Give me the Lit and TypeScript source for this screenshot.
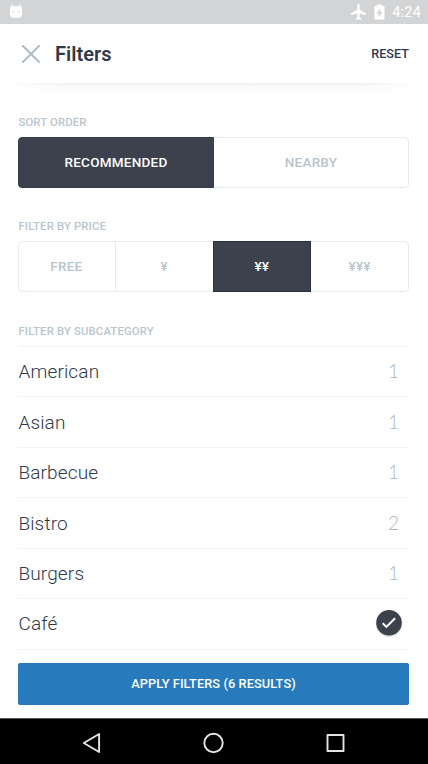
import { LitElement, html, css, svg } from "lit";
import { customElement, property, state } from "lit/decorators.js";
import { classMap } from "lit/directives/class-map.js";

@customElement("status-bar")
class StatusBar extends LitElement {
  static styles = css`
    :host { display: flex; align-items: center; height: 24px; background: #d3d4d6; color: #fff; box-sizing: border-box; padding: 0 7px 0 9px; font: 400 14.5px/24px Roboto, sans-serif; }
    .spacer { flex: 1; }
    .robot { margin-top: -3px; }
    .plane { margin-right: 8px; }
    .battery { margin-right: 7px; }
    .time { letter-spacing: 0.2px; padding-top: 2px; }
    svg { display: block; }
  `;
  render() {
    return html`
      <svg class="robot" width="14" height="16" viewBox="0 0 14 16">
        <path d="M3.5 3.5 2.8.8M10.5 3.5l.7-2.7" stroke="#fff" stroke-width="1" fill="none" />
        <path d="M3 3h8q2 0 2 2v6q0 4-4 4H5q-4 0-4-4V5q0-2 2-2z" fill="#fff" />
        <path d="M3 8.6h2M9 8.6h2" stroke="#d3d4d6" stroke-width="1" />
      </svg>
      <span class="spacer"></span>
      <svg class="plane" width="15" height="16" viewBox="2 2 19.6 20" preserveAspectRatio="none">
        <path fill="#fff" d="M21.5 16v-2l-8.2-5V3.5C13.3 2.67 12.6 2 11.8 2s-1.5.67-1.5 1.5V9l-8.2 5v2l8.2-2.5V19l-2 1.5V22l3.5-1 3.5 1v-1.5l-2-1.5v-5.5z" />
      </svg>
      <svg class="battery" width="11" height="16" viewBox="0 0 11 16">
        <path fill="#fff" fill-rule="evenodd" d="M3.2.5h4.6v1.3H9.3q1.2 0 1.2 1.2v11.3q0 1.2-1.2 1.2H1.7q-1.2 0-1.2-1.2V3q0-1.2 1.2-1.2h1.5zM6.3 4.3 2.4 9.4h2.3v3.8l3.9-5.3H6.3z" />
      </svg>
      <span class="time">4:24</span>
    `;
  }
}

@customElement("segment-group")
class SegmentGroup extends LitElement {
  @property({ attribute: false }) options: string[] = [];
  @property({ type: Number }) selected = 0;

  static styles = css`
    :host { display: flex; height: 51px; box-sizing: border-box; border: 1px solid #e6ecee; border-radius: 4px; }
    .option { flex: 1 1 0; margin: -1px 0; padding: 0; border: 0; border-left: 1px solid #e6ecee; background: none; color: #b8c5cd; font: 500 13.5px/51px Roboto, sans-serif; letter-spacing: 0.24px; box-sizing: border-box; }
    .option:first-child { border-left: 0; margin-left: -1px; }
    .on { background: #3b424e; color: #fff; border: 1px solid #27303f; }
    .on.option { line-height: 49px; }
    .on:first-child { border-radius: 4px 0 0 4px; border: 1px solid #343e4c; }
    .on + .option { border-left: 0; }
  `;
  render() {
    return this.options.map(
      (label, i) => html`<button class=${classMap({ option: true, on: i === this.selected })} @click=${() => (this.selected = i)}>${label}</button>`
    );
  }
}

@customElement("app-root")
class AppRoot extends LitElement {
  @state() private rows = [
    { name: "American", count: 1 },
    { name: "Asian", count: 1 },
    { name: "Barbecue", count: 1 },
    { name: "Bistro", count: 2 },
    { name: "Burgers", count: 1 },
    { name: "Café", checked: true },
  ] as { name: string; count?: number; checked?: boolean }[];

  static styles = css`
    :host { display: flex; flex-direction: column; height: 764px; overflow: hidden; background: #fff; font-family: Roboto, sans-serif; color: #2f394b; }
    svg { display: block; }
    .header { display: flex; align-items: center; height: 59px; padding: 0 19px 0 22px; flex: none; box-sizing: border-box; }
    .title { margin: 0 0 0 15px; flex: 1; font-size: 20px; font-weight: 600; line-height: 24px; letter-spacing: 0.05px; }
    .reset { font-size: 12.6px; font-weight: 500; line-height: 16px; letter-spacing: 0.05px; }
    .shade { height: 12px; flex: none; margin: 0 8px; background: linear-gradient(90deg, #fff, transparent 14%, transparent 86%, #fff), linear-gradient(#f0f0f1, #fbfbfb 35%, #fff); }
    .content { padding: 19px 19px 0 18px; }
    .label { height: 16px; margin: 0 0 7px; font-size: 11.3px; font-weight: 500; line-height: 17px; color: #b8c5cd; letter-spacing: 0.17px; text-indent: 0.4px; }
    .group { margin-bottom: 30px; }
    .group + .label + .group { margin-bottom: 31px; }
    .list { border-top: 1px solid #f3f4f5; }
    .row { display: flex; align-items: center; justify-content: space-between; height: 50.45px; box-sizing: border-box; padding-right: 10px; border-bottom: 1px solid #f3f4f5; font-size: 19px; font-weight: 300; }
    .name { letter-spacing: 0.15px; text-indent: 0.4px; }
    .count { font-family: Lato, sans-serif; font-size: 19px; font-weight: 300; line-height: 22px; padding-bottom: 1px; color: #a9b8c1; }
    .check { margin: -1px -3.5px 0 0; }
    .apply { display: block; flex: none; height: 42px; margin: 13.5px 19px 0 18px; padding: 0; border: 0; border-radius: 2px; background: #277abb; color: #fff; font: 500 12.8px/42px Roboto, sans-serif; letter-spacing: 0.07px; }
    .nav { display: flex; align-items: center; justify-content: space-between; height: 46.5px; margin-top: auto; flex: none; padding: 3px 82px 0 81px; background: #000; border-top: 1px solid #555; box-sizing: border-box; }
  `;

  private check() {
    return html`<svg class="check" width="28" height="28" viewBox="0 0 28 28">
      <circle cx="14" cy="14.6" r="13.4" fill="#000" opacity=".13" />
      <circle cx="14" cy="13.8" r="12.8" fill="#3b424e" />
      <path d="M7.7 14.2l3.7 3.7 8.7-8.7" fill="none" stroke="#fff" stroke-width="2" />
    </svg>`;
  }

  private navIcon(shape: unknown) {
    return html`<svg width="21" height="22" viewBox="0 0 21 22" fill="none" stroke="#e4e4e4" stroke-width="1.9" stroke-linejoin="round">${shape}</svg>`;
  }

  render() {
    return html`
      <status-bar></status-bar>
      <div class="header">
        <svg width="18" height="18" viewBox="0 0 18 18"><path d="M1 1l16 16M17 1L1 17" stroke="#afbec8" stroke-width="2.1" stroke-linecap="round" /></svg>
        <h1 class="title">Filters</h1>
        <span class="reset">RESET</span>
      </div>
      <div class="shade"></div>
      <div class="content">
        <h2 class="label">SORT ORDER</h2>
        <segment-group class="group" .options=${["RECOMMENDED", "NEARBY"]} .selected=${0}></segment-group>
        <h2 class="label">FILTER BY PRICE</h2>
        <segment-group class="group" .options=${["FREE", "¥", "¥¥", "¥¥¥"]} .selected=${2}></segment-group>
        <h2 class="label">FILTER BY SUBCATEGORY</h2>
        <div class="list">
          ${this.rows.map(
            (r) => html`<div class="row">
              <span class="name">${r.name}</span>
              ${r.checked ? this.check() : html`<span class="count">${r.count}</span>`}
            </div>`
          )}
        </div>
      </div>
      <button class="apply">APPLY FILTERS (6 RESULTS)</button>
      <div class="nav">
        ${this.navIcon(svg`<path d="M2.8 11L18.1 2v18z" />`)}
        ${this.navIcon(svg`<circle cx="10.5" cy="11" r="9.2" />`)}
        ${this.navIcon(svg`<rect x="2.5" y="3" width="16" height="16" />`)}
      </div>
    `;
  }
}
